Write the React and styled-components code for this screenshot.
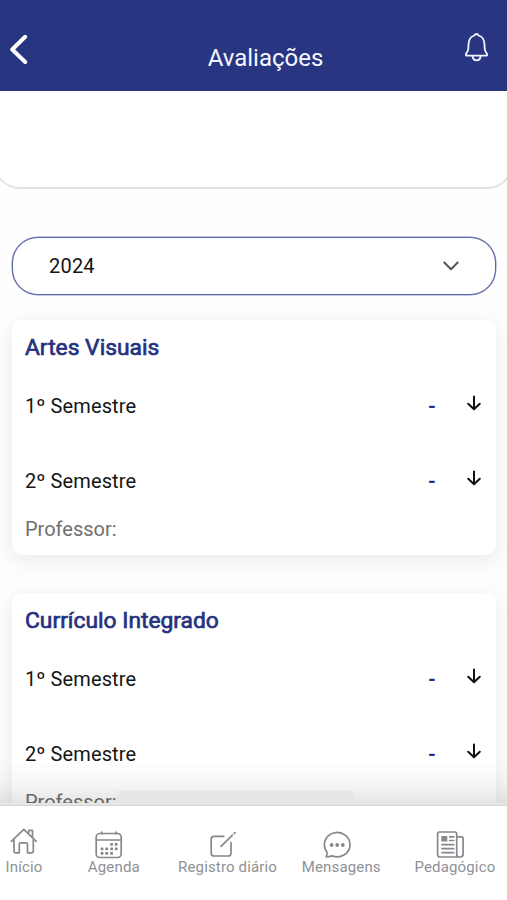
import React from "react";
import styled, { createGlobalStyle } from "styled-components";

const Global = createGlobalStyle`
  * { box-sizing: border-box; }
  body { margin: 0; background: #fefefe; font-family: Roboto, "Liberation Sans", sans-serif; }
`;

const Screen = styled.div`
  display: flex;
  flex-direction: column;
  width: 507px;
  height: 900px;
  overflow: hidden;
  background: #fefefe;
`;

const Header = styled.header`
  display: grid;
  grid-template-columns: 60px 1fr 60px;
  height: 91px;
  flex: none;
  background: #283581;
  color: #f4f6ff;
`;

const BackButton = styled.div`
  padding: 34px 0 0 9px;
`;

const BellButton = styled.div`
  padding: 32px 0 0 16px;
`;

const Title = styled.h1`
  margin: 0;
  padding: 44px 0 0 24px;
  font-size: 24px;
  line-height: 28px;
  font-weight: 400;
  text-align: center;
`;

const Content = styled.main`
  flex: 1;
  min-height: 0;
  overflow: hidden;
`;

const TopPanel = styled.section`
  height: 98px;
  margin: 0 -7px;
  border: 2px solid #e4e4e4;
  border-top: 0;
  border-radius: 0 0 27px 27px;
  background: #fff;
`;

const YearSelect = styled.div`
  display: flex;
  align-items: center;
  justify-content: space-between;
  width: 484px;
  height: 58px;
  margin: 48px 0 0 12px;
  padding: 0 35px 0 36px;
  border: 1px solid #5a64a8;
  border-radius: 26px;
  background: #fff;
  color: #151515;
  font-size: 20px;
  letter-spacing: 0.2px;
  box-shadow: 0 0 0 0.5px #8a91c4;
`;

const Card = styled.article`
  width: 484px;
  height: 235px;
  margin: ${(p) => p.$gap} 0 0 12px;
  padding: 14px 12px 0 13px;
  border-radius: 10px;
  background: #fff;
  box-shadow: 0 5px 22px rgba(0, 0, 0, 0.09);
`;

const Subject = styled.h2`
  margin: 0;
  color: #26327f;
  font-size: 22.8px;
  line-height: 28px;
  font-weight: 400;
  -webkit-text-stroke: 0.7px #26327f;
`;

const Term = styled.div`
  display: grid;
  grid-template-columns: 1fr 21px 17px 16px;
  align-items: center;
  height: 24px;
  margin: ${(p) => p.$gap} 2px 0 0;
  color: #151515;
  font-size: 20px;
  line-height: 24px;
  letter-spacing: 0.1px;
`;

const Grade = styled.div`
  width: 6px;
  color: #26327f;
  font-weight: 700;
`;

const DownIcon = styled.svg`
  grid-column: 4;
  margin-top: -5px;
  display: block;
`;

const Teacher = styled.div`
  margin-top: 24px;
  color: #707070;
  font-size: 20px;
  line-height: 24px;
`;

const NavArea = styled.div`
  position: relative;
  flex: none;
`;

const Fade = styled.div`
  position: absolute;
  left: 0;
  right: 0;
  bottom: 100%;
  height: 44px;
  border-bottom: 2px solid #e6e6e6;
  background: linear-gradient(rgba(0, 0, 0, 0), rgba(0, 0, 0, 0.035) 55%, rgba(0, 0, 0, 0.1));

  &::after {
    content: "";
    position: absolute;
    left: 118px;
    width: 235px;
    bottom: 0;
    height: 12px;
    background: linear-gradient(rgba(0, 0, 0, 0.035), rgba(0, 0, 0, 0));
  }
`;

const Nav = styled.nav`
  display: grid;
  grid-template-columns: 57px repeat(4, 113.7px);
  height: 95px;
  overflow: hidden;
  border-top: 1px solid #d4d4d4;
  background: #fff;
  color: #8e9196;
`;

const Tab = styled.div`
  display: flex;
  flex-direction: column;
  align-items: center;
  padding: 22px ${(p) => p.$inset || "0"} 0 0;
  font-size: 15px;
  line-height: 18px;
  letter-spacing: 0.15px;
  white-space: nowrap;
`;

const TabIcon = styled.svg`
  display: block;
  width: 30px;
  height: 30px;
  flex: none;
  overflow: visible;
  margin-right: ${(p) => p.$shift || "0"};
  fill: none;
  stroke: #85888d;
  stroke-width: 1.7;
  stroke-linecap: round;
  stroke-linejoin: round;
`;

const SolidShape = styled.g`
  fill: #85888d;
  stroke: none;
`;

const Label = styled.span`
  height: 18px;
`;

const ArrowDown = () => (
  <DownIcon width="16" height="18" viewBox="0 0 16 18" fill="none" stroke="#111" strokeWidth="2" strokeLinecap="round" strokeLinejoin="round">
    <path d="M8 1.500v12.500M2.200 8.800 8 14.300 13.800 8.800" />
  </DownIcon>
);

const SubjectCard = ({ name, gap }) => (
  <Card $gap={gap}>
    <Subject>{name}</Subject>
    <Term $gap="32px">
      <span>1º Semestre</span>
      <Grade>-</Grade>
      <ArrowDown />
    </Term>
    <Term $gap="51px">
      <span>2º Semestre</span>
      <Grade>-</Grade>
      <ArrowDown />
    </Term>
    <Teacher>Professor:</Teacher>
  </Card>
);

const HomeIcon = () => (
  <TabIcon viewBox="0 1 30 30">
    <path d="m2.3 14.3 12.5-12 12.4 12M5 13v11.5q0 1.3 1.3 1.3h4V17q0-1.2 1.2-1.2h5.8q1.2 0 1.2 1.2v8.8h4q1.8 0 1.8-1.7V13M19.7 5.5V3.3h3.8v7" />
  </TabIcon>
);

const CalendarIcon = () => (
  <TabIcon viewBox="0 -1 30 30" $shift="9px">
    <rect x="2.2" y="4.5" width="25" height="24" rx="3.5" />
    <path d="M2.5 11h24.5M7.7 3.2v1.5M22 3.2v1.5" />
    <SolidShape>
      {[[16.2, 14], [20.8, 14], [6.6, 18.5], [11.3, 18.5], [16.2, 18.5], [20.8, 18.5], [6.6, 23], [11.3, 23], [16.2, 23]].map(([x, y]) => (
        <rect key={`${x}-${y}`} x={x} y={y} width="2.8" height="2.7" rx="0.6" />
      ))}
    </SolidShape>
  </TabIcon>
);

const PencilIcon = () => (
  <TabIcon viewBox="0 0 30 30" $shift="11px">
    <path d="M16.8 8.3H7Q4.200 8.3 4.200 11v14.2q0 2.8 2.8 2.8h14.200q2.8 0 2.8-2.8V14.500M14 18.300 25.500 7.200M27.300 5.400l.8-.8" />
  </TabIcon>
);

const ChatIcon = () => (
  <TabIcon viewBox="0 0 30 30" $shift="9px">
    <path d="M4.2 29q1.4-3.2.7-5.1a12.8 12.2 0 1 1 5.3 4Q7.5 28.9 4.2 29Z" />
    <SolidShape>
      <circle cx="9.6" cy="17" r="1.9" />
      <circle cx="15.2" cy="17" r="1.9" />
      <circle cx="20.8" cy="17" r="1.9" />
    </SolidShape>
  </TabIcon>
);

const NewsIcon = () => (
  <TabIcon viewBox="0 0.500 30 30" $shift="9px">
    <path d="M21.7 27V6.3q0-1.8-1.8-1.8H4.4q-1.8 0-1.8 1.8V27q0 2.5 2.5 2.5h20q3 0 3-3V11.3q0-1.9-1.9-1.9h-4.5M21.7 27q0 2.5 2.2 2.5M14.7 9.3h4M14.7 13h4M7 17.2h11.7M7 21.2h11.7M7 25.2h11.7" />
    <SolidShape><rect x="6.3" y="8.4" width="6" height="5.7" rx="0.7" /></SolidShape>
  </TabIcon>
);

export default function App() {
  return (
    <>
      <Global />
      <Screen>
        <Header>
          <BackButton>
            <svg width="20" height="32" viewBox="0 0 20 32" fill="none" stroke="#fff" strokeWidth="4" strokeLinecap="round" strokeLinejoin="round">
              <path d="M16.200 2.800 3.200 15.500l13 12.500" />
            </svg>
          </BackButton>
          <Title>Avaliações</Title>
          <BellButton>
            <svg width="28" height="32" viewBox="0 0 28 32" fill="none" stroke="#f4f6ff" strokeWidth="1.8" strokeLinecap="round" strokeLinejoin="round">
              <path d="M13.500 2c-1.200 0-1.700.7-2.200 1.500C7.500 4.700 5.800 8 5.600 11.500l-.4 6c-.2 2-1.800 2.900-2.300 4.700-.2.900.1 1.500 1 1.500h19.200c.9 0 1.200-.6 1-1.500-.5-1.800-2.100-2.700-2.300-4.700l-.4-6C21.200 8 19.500 4.700 15.700 3.500c-.5-.8-1-1.500-2.200-1.500ZM9.500 23.900c.2 2.700 1.700 4.400 4.100 4.400s3.900-1.700 4.100-4.400" />
            </svg>
          </BellButton>
        </Header>
        <Content>
          <TopPanel />
          <YearSelect>
            <span>2024</span>
            <svg width="18" height="12" viewBox="0 0 18 12" fill="none" stroke="#555" strokeWidth="2" strokeLinecap="round" strokeLinejoin="round">
              <path d="m2.300 2.500 6.700 6.700 6.700-6.700" />
            </svg>
          </YearSelect>
          <SubjectCard name="Artes Visuais" gap="25px" />
          <SubjectCard name="Currículo Integrado" gap="38px" />
        </Content>
        <NavArea>
          <Fade />
          <Nav>
            <Tab $inset="9px"><HomeIcon /><Label>Início</Label></Tab>
            <Tab><CalendarIcon /><Label>Agenda</Label></Tab>
            <Tab><PencilIcon /><Label>Registro diário</Label></Tab>
            <Tab><ChatIcon /><Label>Mensagens</Label></Tab>
            <Tab><NewsIcon /><Label>Pedagógico</Label></Tab>
          </Nav>
        </NavArea>
      </Screen>
    </>
  );
}
